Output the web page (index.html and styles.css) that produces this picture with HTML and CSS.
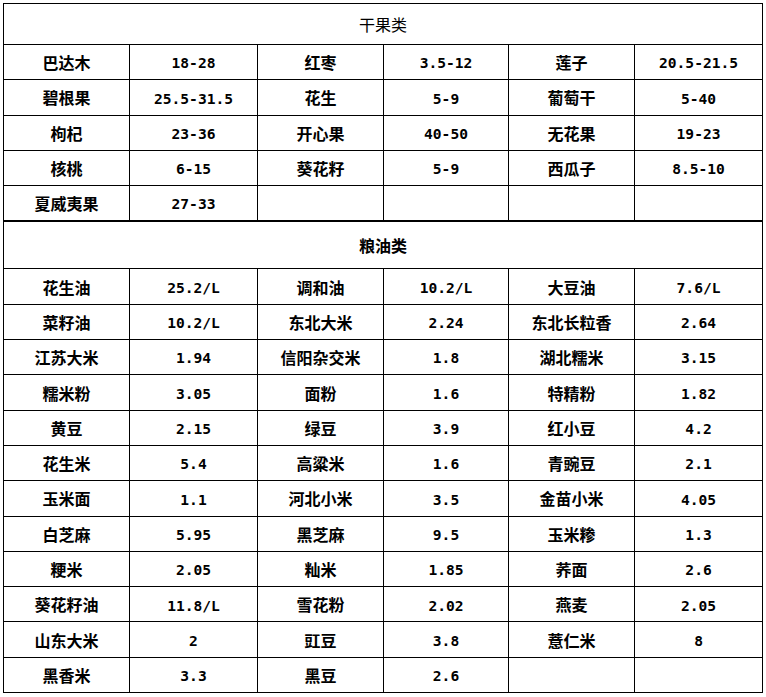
FILE: index.html
```html
<!DOCTYPE html>
<html lang="zh-CN">
<head>
<meta charset="utf-8">
<title>价格表</title>
<link rel="stylesheet" href="styles.css">
</head>
<body>
<div class="page">
<table class="price-table">
  <colgroup>
    <col class="c1"><col class="c2"><col class="c3"><col class="c4"><col class="c5"><col class="c6">
  </colgroup>
  <tbody>
    <tr class="head head-first"><td colspan="6" class="title">干果类</td></tr>
    <tr class="row"><td class="name">巴达木</td><td class="val">18-28</td><td class="name">红枣</td><td class="val">3.5-12</td><td class="name">莲子</td><td class="val">20.5-21.5</td></tr>
    <tr class="row"><td class="name">碧根果</td><td class="val">25.5-31.5</td><td class="name">花生</td><td class="val">5-9</td><td class="name">葡萄干</td><td class="val">5-40</td></tr>
    <tr class="row"><td class="name">枸杞</td><td class="val">23-36</td><td class="name">开心果</td><td class="val">40-50</td><td class="name">无花果</td><td class="val">19-23</td></tr>
    <tr class="row"><td class="name">核桃</td><td class="val">6-15</td><td class="name">葵花籽</td><td class="val">5-9</td><td class="name">西瓜子</td><td class="val">8.5-10</td></tr>
    <tr class="row"><td class="name">夏威夷果</td><td class="val">27-33</td><td></td><td></td><td></td><td></td></tr>
    <tr class="head head-second"><td colspan="6" class="title bold">粮油类</td></tr>
    <tr class="row"><td class="name">花生油</td><td class="val">25.2/L</td><td class="name">调和油</td><td class="val">10.2/L</td><td class="name">大豆油</td><td class="val">7.6/L</td></tr>
    <tr class="row"><td class="name">菜籽油</td><td class="val">10.2/L</td><td class="name">东北大米</td><td class="val">2.24</td><td class="name">东北长粒香</td><td class="val">2.64</td></tr>
    <tr class="row"><td class="name">江苏大米</td><td class="val">1.94</td><td class="name">信阳杂交米</td><td class="val">1.8</td><td class="name">湖北糯米</td><td class="val">3.15</td></tr>
    <tr class="row"><td class="name">糯米粉</td><td class="val">3.05</td><td class="name">面粉</td><td class="val">1.6</td><td class="name">特精粉</td><td class="val">1.82</td></tr>
    <tr class="row"><td class="name">黄豆</td><td class="val">2.15</td><td class="name">绿豆</td><td class="val">3.9</td><td class="name">红小豆</td><td class="val">4.2</td></tr>
    <tr class="row"><td class="name">花生米</td><td class="val">5.4</td><td class="name">高粱米</td><td class="val">1.6</td><td class="name">青豌豆</td><td class="val">2.1</td></tr>
    <tr class="row"><td class="name">玉米面</td><td class="val">1.1</td><td class="name">河北小米</td><td class="val">3.5</td><td class="name">金苗小米</td><td class="val">4.05</td></tr>
    <tr class="row"><td class="name">白芝麻</td><td class="val">5.95</td><td class="name">黑芝麻</td><td class="val">9.5</td><td class="name">玉米糁</td><td class="val">1.3</td></tr>
    <tr class="row"><td class="name">粳米</td><td class="val">2.05</td><td class="name">籼米</td><td class="val">1.85</td><td class="name">荞面</td><td class="val">2.6</td></tr>
    <tr class="row"><td class="name">葵花籽油</td><td class="val">11.8/L</td><td class="name">雪花粉</td><td class="val">2.02</td><td class="name">燕麦</td><td class="val">2.05</td></tr>
    <tr class="row"><td class="name">山东大米</td><td class="val">2</td><td class="name">豇豆</td><td class="val">3.8</td><td class="name">薏仁米</td><td class="val">8</td></tr>
    <tr class="row"><td class="name">黑香米</td><td class="val">3.3</td><td class="name">黑豆</td><td class="val">2.6</td><td></td><td></td></tr>
  </tbody>
</table>
</div>
</body>
</html>
```
FILE: styles.css
```css
html, body {
  margin: 0;
  padding: 0;
  background: #ffffff;
}

.page {
  padding: 3px 0 0 3px;
}

.price-table {
  border-collapse: collapse;
  table-layout: fixed;
  width: 759px;
  color: #000000;
  font-family: "Noto Sans CJK SC", "Noto Sans", sans-serif;
  font-size: 16px;
}

.c1 { width: 126px; }
.c2 { width: 128px; }
.c3 { width: 126px; }
.c4 { width: 125px; }
.c5 { width: 126px; }
.c6 { width: 128px; }

.price-table td {
  border: 1px solid #000000;
  padding: 0;
  text-align: center;
  vertical-align: middle;
  line-height: 1;
}

.head-first { height: 41px; }
.head-second { height: 48px; }
.head-second td { border-top: 2px solid #000000; }
.row { height: 35.3px; }

.title {
  font-weight: 400;
  font-size: 16px;
}

.title.bold {
  font-weight: 700;
}

.name {
  font-weight: 700;
}

.price-table td.val {
  font-family: "DejaVu Sans Mono", "Liberation Mono", monospace;
  font-weight: 700;
  font-size: 14.6px;
  padding-top: 3px;
}
```
